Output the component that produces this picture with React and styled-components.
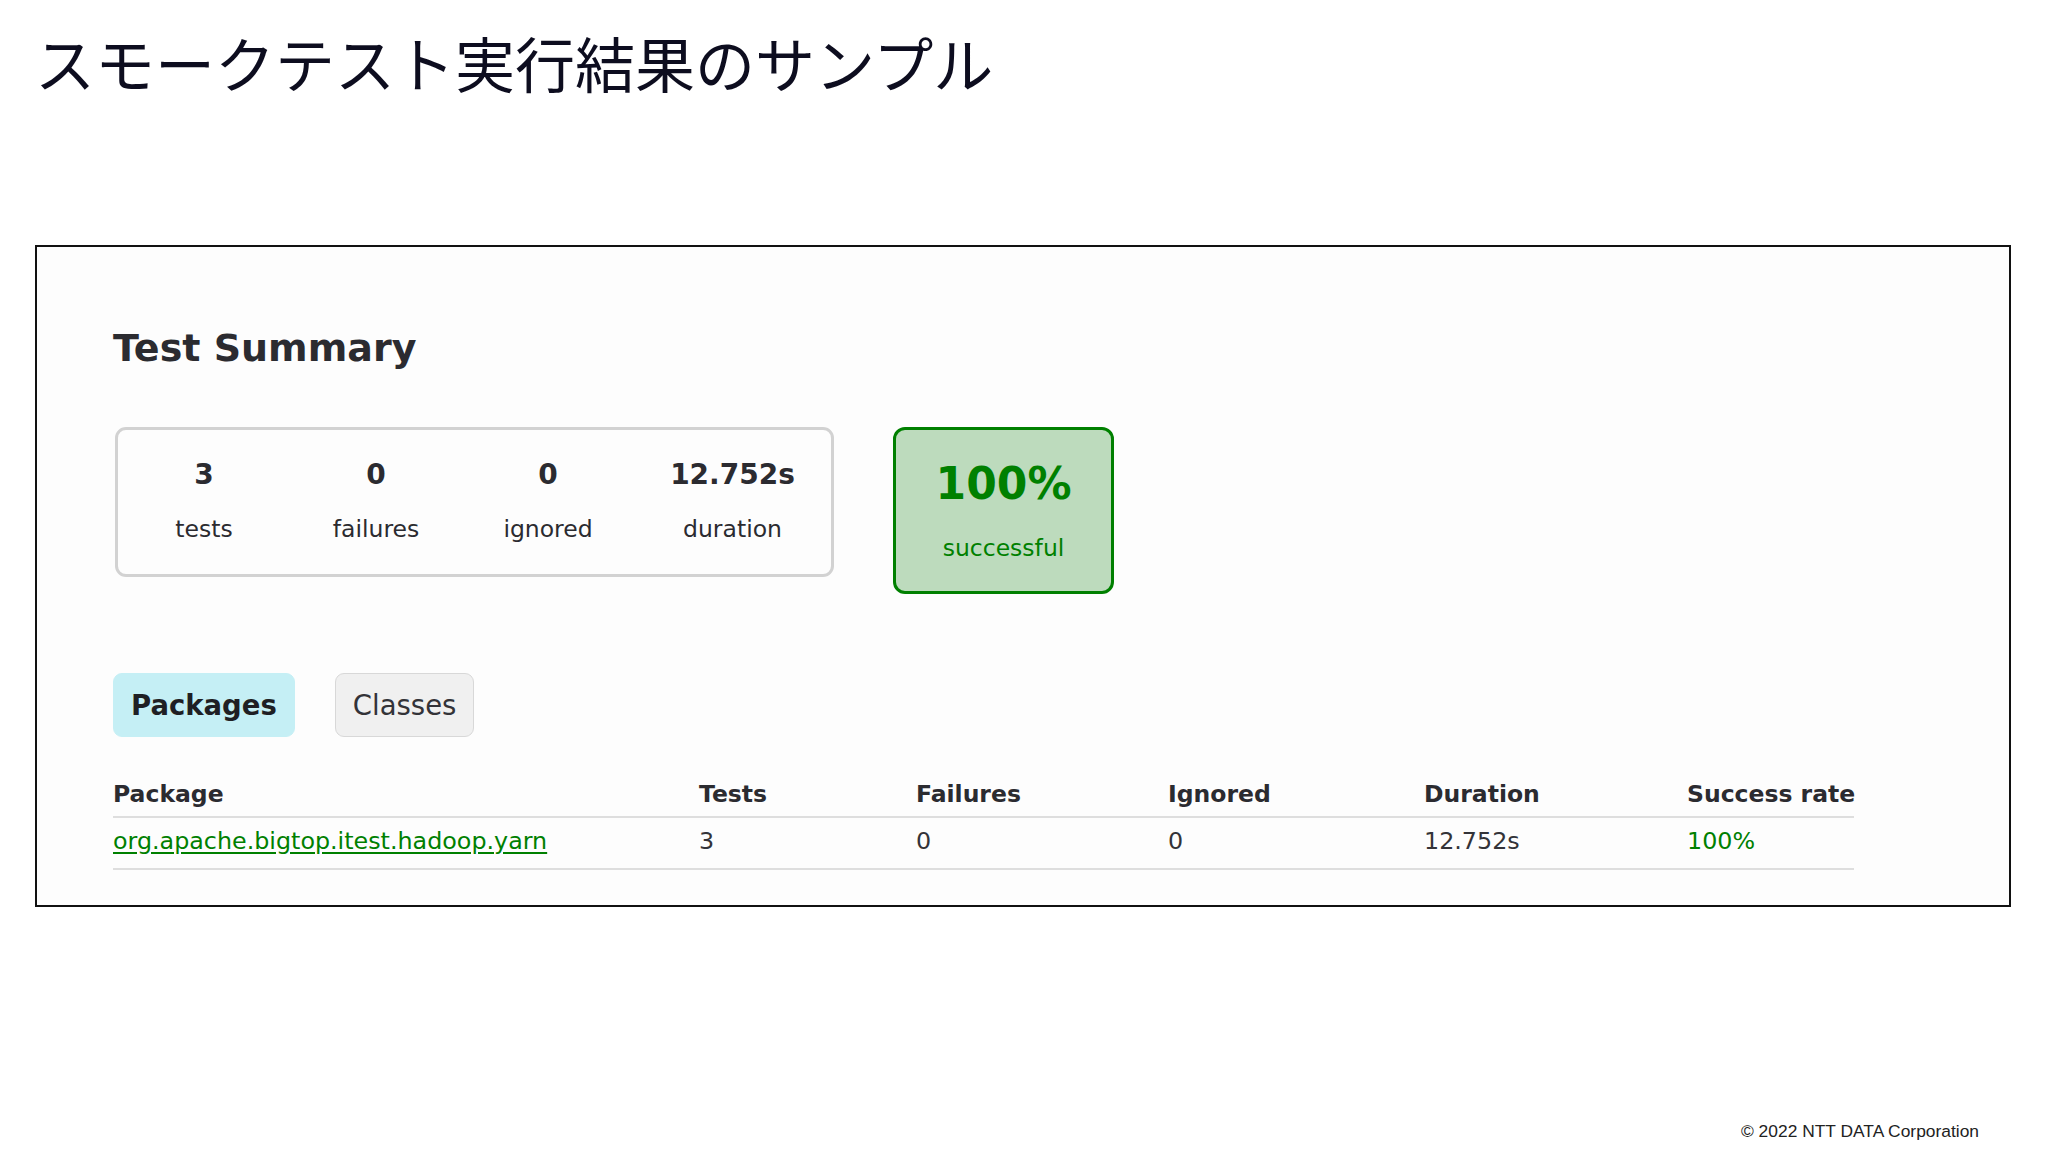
import styled, {createGlobalStyle} from "styled-components";

const GlobalStyle = createGlobalStyle`
  html, body {
    margin: 0;
    padding: 0;
    background: #ffffff;
  }
`;

const COLORS = {
    ink: "#2b2b30",
    green: "#008000",
    greenBg: "#bddbbd",
    grayBorder: "#d2d2d2",
    tabBg: "#f0f0f0",
    tabSelected: "#c5eff5",
    rule: "#dedede",
};

const Slide = styled.div`
  width: 2048px;
  height: 1152px;
  box-sizing: border-box;
  padding: 22px 37px 0 35px;
  display: flex;
  flex-direction: column;
  background: #ffffff;
`;

const SlideTitle = styled.h1`
  margin: 0;
  font-family: "Noto Sans CJK JP", sans-serif;
  font-weight: 400;
  font-size: 60px;
  line-height: 80px;
  color: #0d0d1f;
  letter-spacing: 0;
`;

const Frame = styled.section`
  margin-top: 143px;
  height: 662px;
  box-sizing: border-box;
  border: 2px solid #111;
  background: #fdfdfd;
  padding: 79px 0 0 76px;
  font-family: "DejaVu Sans", Verdana, sans-serif;
  color: ${COLORS.ink};
`;

const Heading = styled.h2`
  margin: 0;
  font-size: 38px;
  line-height: 44px;
  font-weight: 700;
`;

const SummaryRow = styled.div`
  display: flex;
  align-items: flex-start;
  gap: 59px;
  margin-top: 57px;
`;

const SummaryGroup = styled.div`
  display: flex;
  border: 3px solid ${COLORS.grayBorder};
  border-radius: 11px;
  margin-left: 2px;
`;

const Counter = styled.div`
  width: ${p => p.w}px;
  padding: 28px 0 30px;
  text-align: center;
  display: flex;
  flex-direction: column;
  gap: 22px;
`;

const Count = styled.div`
  font-size: 28px;
  line-height: 34px;
  font-weight: 700;
`;

const Label = styled.div`
  font-size: 23.5px;
  line-height: 30px;
`;

const RateBox = styled.div`
  width: 221px;
  box-sizing: border-box;
  border: 3px solid ${COLORS.green};
  border-radius: 12px;
  background: ${COLORS.greenBg};
  color: ${COLORS.green};
  text-align: center;
  padding: 29px 0 28px;
  display: flex;
  flex-direction: column;
  gap: 24px;
`;

const Rate = styled.div`
  font-size: 44px;
  line-height: 50px;
  font-weight: 700;
`;

const Tabs = styled.ul`
  display: flex;
  gap: 40px;
  margin: 79px 0 0;
  padding: 0;
  list-style: none;
`;

const Tab = styled.li`
  padding: 14px 17px;
  border: 1px solid ${p => (p.selected ? COLORS.tabSelected : "#d8d8d8")};
  border-radius: 9px;
  background: ${p => (p.selected ? COLORS.tabSelected : COLORS.tabBg)};
  font-size: 27.5px;
  line-height: 34px;
  font-weight: ${p => (p.selected ? 700 : 400)};
  color: ${p => (p.selected ? "#1f1f24" : "#333338")};
`;

const Table = styled.div`
  display: grid;
  grid-template-columns: 586px 217px 252px 256px 263px 167px;
  width: 1741px;
  margin-top: 34px;
`;

const HeadCell = styled.div`
  padding: 8px 0 7px;
  border-bottom: 2px solid ${COLORS.rule};
  font-size: 23.5px;
  line-height: 30px;
  font-weight: 700;
  white-space: nowrap;
`;

const Cell = styled.div`
  padding: 8px 0 12px;
  border-bottom: 2px solid ${COLORS.rule};
  font-size: 23.8px;
  line-height: 30px;
  white-space: nowrap;
  color: ${p => (p.success ? COLORS.green : "#333338")};
`;

const PackageLink = styled.a`
  color: ${COLORS.green};
  text-decoration: underline;
  text-underline-offset: 3px;
`;

const Footer = styled.div`
  margin-top: auto;
  align-self: flex-end;
  margin-right: 32px;
  padding-bottom: 10px;
  font-family: "Liberation Sans", Arial, sans-serif;
  font-size: 17.4px;
  line-height: 22px;
  color: #222;
`;

const counters = [
    {value: "3", label: "tests", w: 172},
    {value: "0", label: "failures", w: 172},
    {value: "0", label: "ignored", w: 172},
    {value: "12.752s", label: "duration", w: 197},
];

const headers = ["Package", "Tests", "Failures", "Ignored", "Duration", "Success rate"];

export default function App() {
    return (
        <>
            <GlobalStyle/>
            <Slide>
                <SlideTitle>スモークテスト実行結果のサンプル</SlideTitle>
                <Frame>
                    <Heading>Test Summary</Heading>
                    <SummaryRow>
                        <SummaryGroup>
                            {counters.map(c => (
                                <Counter key={c.label} w={c.w}>
                                    <Count>{c.value}</Count>
                                    <Label>{c.label}</Label>
                                </Counter>
                            ))}
                        </SummaryGroup>
                        <RateBox>
                            <Rate>100%</Rate>
                            <Label>successful</Label>
                        </RateBox>
                    </SummaryRow>
                    <Tabs>
                        <Tab selected>Packages</Tab>
                        <Tab>Classes</Tab>
                    </Tabs>
                    <Table>
                        {headers.map(h => <HeadCell key={h}>{h}</HeadCell>)}
                        <Cell><PackageLink href="#">org.apache.bigtop.itest.hadoop.yarn</PackageLink></Cell>
                        <Cell>3</Cell>
                        <Cell>0</Cell>
                        <Cell>0</Cell>
                        <Cell>12.752s</Cell>
                        <Cell success>100%</Cell>
                    </Table>
                </Frame>
                <Footer>© 2022 NTT DATA Corporation</Footer>
            </Slide>
        </>
    );
}
